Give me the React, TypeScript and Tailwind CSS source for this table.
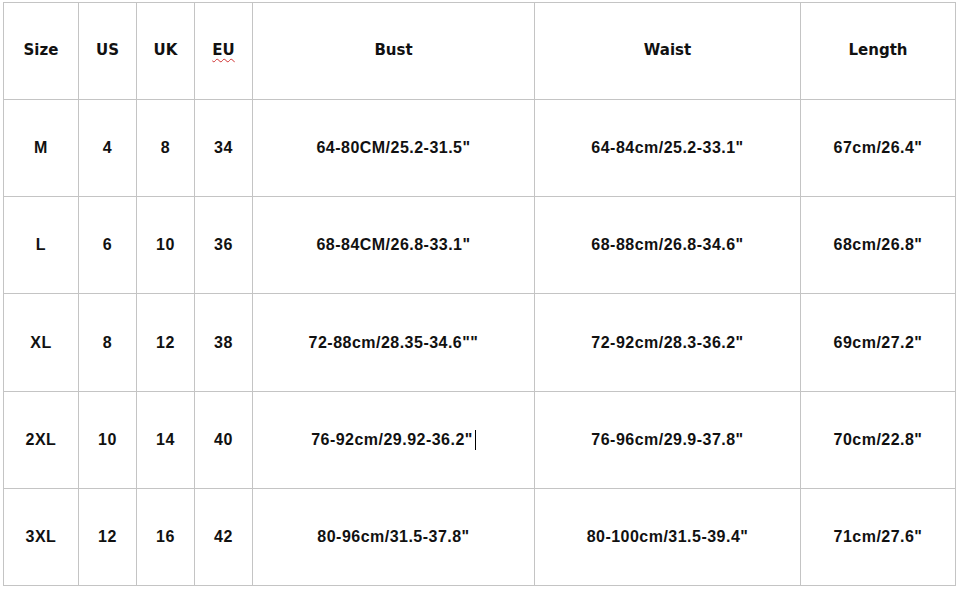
const headers = ["Size", "US", "UK", "EU", "Bust", "Waist", "Length"];

const rows = [
  ["M", "4", "8", "34", "64-80CM/25.2-31.5\"", "64-84cm/25.2-33.1\"", "67cm/26.4\""],
  ["L", "6", "10", "36", "68-84CM/26.8-33.1\"", "68-88cm/26.8-34.6\"", "68cm/26.8\""],
  ["XL", "8", "12", "38", "72-88cm/28.35-34.6\"\"", "72-92cm/28.3-36.2\"", "69cm/27.2\""],
  ["2XL", "10", "14", "40", "76-92cm/29.92-36.2\"", "76-96cm/29.9-37.8\"", "70cm/22.8\""],
  ["3XL", "12", "16", "42", "80-96cm/31.5-37.8\"", "80-100cm/31.5-39.4\"", "71cm/27.6\""],
];

export default function App() {
  return (
    <div className="h-[589px] w-[959px] bg-white pl-[3px] pt-[2px]">
      <div className="grid w-[953px] grid-cols-[74px_57px_57px_57px_281px_265px_154px] grid-rows-[96px_96px_96px_97px_96px_96px] gap-px bg-[#c4c4c4] p-px">
        {headers.map((h) => (
          <div
            key={h}
            className="flex items-center justify-center bg-white pb-[1px] text-[15px] font-bold text-[#111] [font-family:'DejaVu_Sans',sans-serif]"
          >
            {h === "EU" ? (
              <span className="underline decoration-[#d03030] decoration-wavy decoration-1 underline-offset-[3px]">EU</span>
            ) : (
              h
            )}
          </div>
        ))}
        {rows.map((r, ri) =>
          r.map((c, ci) => (
            <div
              key={`${ri}-${ci}`}
              className="flex items-center justify-center bg-white text-[16px] font-bold tracking-[0.03em] text-[#111] [font-family:'Liberation_Sans',Arial,sans-serif]"
            >
              {c}
              {ri === 3 && ci === 4 && <span className="ml-[2px] inline-block h-[20px] w-px bg-black" />}
            </div>
          )),
        )}
      </div>
    </div>
  );
}
